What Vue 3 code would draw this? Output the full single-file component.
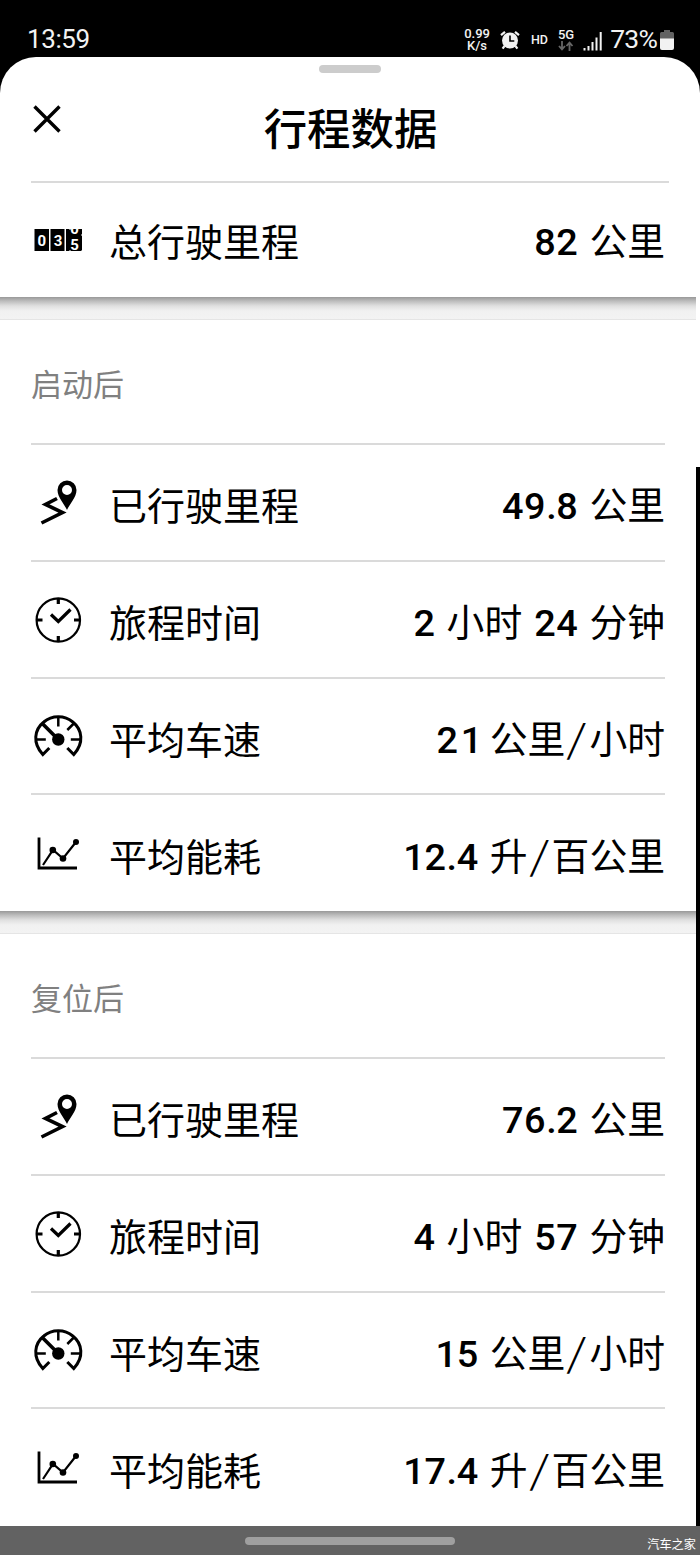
<template>
  <div class="phone">
    <header class="status">
      <span class="time">13:59</span>
      <div class="indicators">
        <div class="speed"><span>0.99</span><span>K/s</span></div>
        <svg class="alarm" viewBox="0 0 20 20" width="20" height="20">
          <circle cx="10" cy="10.5" r="8" fill="#f2f2f2" />
          <path
            d="M1 5.2 5 1.8M19 5.2 15 1.8M4.5 16 2.6 18.6M15.5 16l1.9 2.6"
            stroke="#f2f2f2"
            stroke-width="2.2"
            fill="none"
          />
          <path d="M10 5.5v5.500h4.300" stroke="#000" stroke-width="1.6" fill="none" />
        </svg>
        <span class="hd">HD</span>
        <div class="network">
          <span>5G</span>
          <svg viewBox="0 0 16 10" width="16" height="10">
            <path
              d="M4 0v8M1 5l3 3.4L7 5M11.5 10V2M8.5 5l3-3.4 3 3.4"
              stroke="#666"
              stroke-width="1.8"
              fill="none"
            />
          </svg>
        </div>
        <svg class="signal" viewBox="0 0 20 20" width="20" height="20">
          <path
            d="M1.500 17v2.500M5.500 15v4.500M9.500 11v8.500M13.500 6.500v13M17.700 1v18.500"
            stroke="#f2f2f2"
            stroke-width="2"
          />
        </svg>
        <span class="percent">73%</span>
        <svg class="battery" viewBox="0 0 14 20" width="14" height="20">
          <path d="M4 0h6v2h2.500q1.500 0 1.500 1.500V9H0V3.500Q0 2 1.500 2H4z" fill="#626262" />
          <path d="M0 8.500h14V18q0 2-2 2H2q-2 0-2-2z" fill="#f2f2f2" />
        </svg>
      </div>
    </header>

    <main class="sheet">
      <div class="grip"></div>
      <div class="heading">
        <svg class="close" viewBox="0 0 28 28" width="28" height="28">
          <path d="M1.500 1.500l25 25M26.500 1.500l-25 25" stroke="#000" stroke-width="3.400" />
        </svg>
        <h1>行程数据</h1>
      </div>

      <div class="row total">
        <svg class="icon" viewBox="0 0 50 50" width="50" height="50">
          <path d="M1.500 14H16v22H1.500zM17.500 14h14v22h-14zM33 14h3l1 1 1-1h11v5l-1 1 1 1v14l-1 1H38l-1-1-1 1h-3z" />
          <text class="digit" x="8.700" y="30.500">0</text>
          <text class="digit" x="25" y="30.500">3</text>
          <svg x="33" y="14" width="16" height="22" viewBox="33 14 16 22">
            <text class="digit" x="41.500" y="19">0</text>
            <text class="digit" x="41.500" y="34.500">5</text>
          </svg>
        </svg>
        <span class="label">总行驶里程</span>
        <span class="value"><b>82</b><span class="unit">公里</span></span>
      </div>
      <div class="divider"></div>

      <template v-for="(section, i) in sections" :key="section.title">
        <div v-if="i > 0" class="divider"></div>
        <section>
          <h2>{{ section.title }}</h2>
          <div v-for="(row, n) in section.rows" :key="row.label" class="row">
            <svg v-if="n === 0" class="icon" viewBox="0 0 50 50" width="50" height="50">
              <path
                fill-rule="evenodd"
                d="M34 32C31.500 26 24.500 19.500 24.500 12a9.500 9.500 0 0 1 19 0C43.500 19.500 36.500 26 34 32zM34 7a5 5 0 1 0 0 10 5 5 0 0 0 0-10z"
              />
              <path class="line" d="M24 20.500 12.500 26.500 29.500 34.500 8.500 45" stroke-width="3.600" />
            </svg>
            <svg v-else-if="n === 1" class="icon" viewBox="0 0 50 50" width="50" height="50">
              <circle class="line" cx="25.300" cy="25" r="21.700" stroke-width="2.200" />
              <path class="line" d="M25.300 3v6M25.300 41v6M3.500 25h6M41 25h6" stroke-width="3.200" />
              <path class="line" d="M18 19.500l7.300 7L37.500 14.500" stroke-width="3.200" />
            </svg>
            <svg v-else-if="n === 2" class="icon" viewBox="0 0 50 50" width="50" height="50">
              <g transform="translate(.3 1.500)">
                <path
                  class="line"
                  d="M16 34.500 9.500 41C-1 29.500 1 16 10.500 8.500c8-7 21-7 29 0C49 16 51 29.500 40.500 41L34 34.500"
                  stroke-width="3"
                />
                <path class="line" d="M25 4v9M3 26h9.500M37.500 26H47M40.500 10 34 16.500" stroke-width="2.500" />
                <path class="line" d="M9.500 10.500 25 26" stroke-width="3.600" />
                <circle cx="25" cy="26" r="6.200" />
              </g>
            </svg>
            <svg v-else class="icon" viewBox="0 0 50 50" width="50" height="50">
              <path class="line" d="M6 8.500v30.500H44" stroke-width="2.800" />
              <path class="line" d="M10 36 20 21l10 8.500L43 13" stroke-width="2.200" />
              <circle cx="19.800" cy="21" r="3.300" />
              <circle cx="30" cy="29.500" r="3.300" />
              <circle cx="43" cy="13" r="3" />
            </svg>
            <span class="label">{{ row.label }}</span>
            <span class="value">
              <template v-for="part in row.parts" :key="part[1]">
                <b><span v-for="(c, k) in part[0]" :key="k" :class="{ one: c === '1', dot: c === '.' }">{{ c }}</span></b>
                <span class="unit"><span v-for="(c, k) in part[1]" :key="k" :class="{ slash: c === '/' }">{{ c }}</span></span>
              </template>
            </span>
          </div>
        </section>
      </template>
      <div class="scrollbar"></div>
    </main>

    <footer class="nav">
      <div class="home"></div>
      <span class="brand">汽车之家</span>
    </footer>
  </div>
</template>

<script setup>
const makeRows = (distance, hours, minutes, speed, usage) => [
  { label: "已行驶里程", parts: [[distance, "公里"]] },
  {
    label: "旅程时间",
    parts: [
      [hours, "小时"],
      [minutes, "分钟"],
    ],
  },
  { label: "平均车速", parts: [[speed, "公里/小时"]] },
  { label: "平均能耗", parts: [[usage, "升/百公里"]] },
];

const sections = [
  { title: "启动后", rows: makeRows("49.8", "2", "24", "21", "12.4") },
  { title: "复位后", rows: makeRows("76.2", "4", "57", "15", "17.4") },
];
</script>

<style>
body {
  margin: 0;
  background: #000;
}
</style>

<style scoped>
.phone {
  width: 700px;
  height: 1555px;
  overflow: hidden;
  display: flex;
  flex-direction: column;
  background: #000;
  font-family: "Noto Sans CJK SC", sans-serif;
  color: #000;
}
.status {
  height: 57px;
  flex: none;
  box-sizing: border-box;
  padding: 22px 26px 0 27px;
  display: flex;
  justify-content: space-between;
  color: #f2f2f2;
  font-family: Roboto, sans-serif;
}
.time {
  font-size: 26px;
  line-height: 34px;
  letter-spacing: -0.4px;
}
.indicators {
  display: flex;
  align-items: center;
  height: 35px;
}
.speed {
  display: flex;
  flex-direction: column;
  align-items: center;
  font-size: 13px;
  line-height: 12px;
  font-weight: 500;
}
.alarm {
  margin-left: 10px;
}
.hd {
  margin-left: 11px;
  font-size: 12.5px;
  font-weight: 500;
}
.network {
  margin-left: 10px;
  display: flex;
  flex-direction: column;
  align-items: center;
  font-size: 13px;
  line-height: 13px;
  font-weight: 500;
}
.signal {
  margin: 3px 0 0 9px;
}
.percent {
  margin-left: 7px;
  margin-top: -2px;
  font-size: 26.5px;
  letter-spacing: -0.8px;
}
.battery {
  margin-left: 3px;
}
.sheet {
  position: relative;
  height: 1469px;
  flex: none;
  background: #fff;
  border-radius: 36px 36px 0 0;
}
.grip {
  width: 62px;
  height: 8px;
  margin: 0 auto;
  border-radius: 4px;
  background: #ccc;
  transform: translateY(8px);
}
.heading {
  height: 116px;
  margin: 0 31px;
  border-bottom: 2px solid #dadada;
  display: grid;
  grid-template-columns: 28px 1fr 28px;
}
.close {
  margin: 40px 0 0 2px;
}
h1 {
  margin: 29px 0 0 1px;
  text-align: center;
  font-size: 43.4px;
  line-height: 64px;
  font-weight: 500;
}
.row {
  height: 116.8px;
  box-sizing: border-box;
  margin: 0 35px 0 31px;
  border-top: 2px solid #dadada;
  display: flex;
  align-items: center;
}
.total {
  height: 114px;
  border-top: 0;
}
.icon {
  flex: none;
  margin: 2px 0 0 2px;
}
.total .icon {
  margin-top: 0;
}
.label {
  margin: 4px 0 0 26px;
  font-size: 38px;
  line-height: 56px;
  font-weight: 400;
}
.total .label {
  margin-top: 0;
}
.digit {
  fill: #fff;
  font: bold 15px Roboto, sans-serif;
  text-anchor: middle;
}
.line {
  fill: none;
  stroke: #000;
}
.value {
  margin: 5px 0 0 auto;
  display: flex;
  align-items: baseline;
  font-size: 37.8px;
  line-height: 56px;
  white-space: nowrap;
}
.total .value {
  margin-top: 1px;
}
.value b {
  font-family: Roboto, sans-serif;
  font-weight: 500;
  letter-spacing: 0.6px;
}
.one {
  margin-right: -4px;
  padding-left: 2px;
}
.one:first-child {
  margin: 0 -1px 0 -2px;
  padding: 0;
}
.dot {
  margin-right: -1px;
}
.unit {
  margin-left: 11px;
}
.unit + b {
  margin-left: 12px;
}
.slash {
  display: inline-block;
  width: 24px;
  text-align: center;
  transform: skewX(-8deg);
}
.divider {
  width: 696px;
  height: 23px;
  box-sizing: border-box;
  border-bottom: 1px solid #e5e5e5;
  background: linear-gradient(#999, #bcbcbc 4px, #e0e0e0 9px, #f1f1f1 14px, #f3f3f3);
}
section {
  height: 591px;
}
h2 {
  height: 123px;
  margin: 0 0 0 31px;
  box-sizing: border-box;
  padding-top: 39px;
  font-size: 31px;
  line-height: 48px;
  font-weight: 400;
  color: #808080;
}
.scrollbar {
  position: absolute;
  top: 410px;
  right: 0;
  bottom: 0;
  width: 4px;
  background: #000;
}
.nav {
  position: relative;
  flex: 1;
  background: #626262;
}
.home {
  width: 210px;
  height: 8px;
  margin: 11px auto 0;
  border-radius: 4px;
  background: #9f9f9f;
}
.brand {
  position: absolute;
  right: 4px;
  bottom: 2px;
  font-size: 12.2px;
  line-height: 18px;
  color: #fff;
}
</style>
